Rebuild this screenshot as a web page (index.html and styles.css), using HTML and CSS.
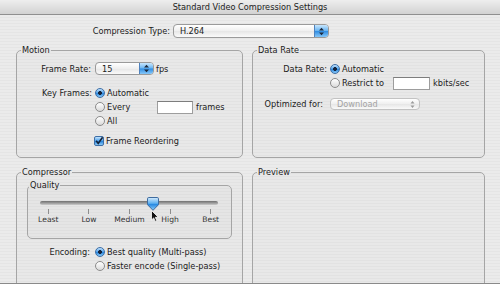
FILE: index.html
```html
<!DOCTYPE html>
<html lang="en">
<head>
    <meta charset="UTF-8">
    <title>Standard Video Compression Settings</title>
    <link rel="stylesheet" href="styles.css">
</head>
<body>
    <div class="window">
        <div class="titlebar">Standard Video Compression Settings</div>

        <div class="type-row">
            <span class="type-label">Compression Type:</span>
            <div class="popup type-popup">
                <span class="value">H.264</span>
                <span class="stepper">
                    <svg width="7" height="9" viewBox="0 0 7 9"><path d="M1 3.5h5L3.5 0.8z M1 5.5h5L3.5 8.2z" fill="#1d2a3d"/></svg>
                </span>
            </div>
        </div>

        <div class="groups">
            <fieldset class="group motion">
                <legend>Motion</legend>
                <div class="row rate-row">
                    <span class="lbl">Frame Rate:</span>
                    <div class="popup rate-popup">
                        <span class="value">15</span>
                        <span class="stepper">
                            <svg width="7" height="9" viewBox="0 0 7 9"><path d="M1 3.5h5L3.5 0.8z M1 5.5h5L3.5 8.2z" fill="#1d2a3d"/></svg>
                        </span>
                    </div>
                    <span class="unit">fps</span>
                </div>
                <div class="row keys-row">
                    <span class="lbl">Key Frames:</span>
                    <div class="options">
                        <div class="opt"><span class="radio on"></span>Automatic</div>
                        <div class="opt">
                            <span class="opt-every"><span class="radio"></span>Every</span>
                            <span class="field keys-field"></span>
                            <span class="unit">frames</span>
                        </div>
                        <div class="opt"><span class="radio"></span>All</div>
                    </div>
                </div>
                <div class="opt reorder">
                    <span class="check">
                        <svg width="10" height="10" viewBox="0 0 10 10"><path d="M2.2 4.8l2 2.6L8.6 1.2" fill="none" stroke="#14233a" stroke-width="1.6"/></svg>
                    </span>Frame Reordering
                </div>
            </fieldset>

            <fieldset class="group data-rate">
                <legend>Data Rate</legend>
                <div class="row datarate-row">
                    <span class="lbl">Data Rate:</span>
                    <div class="options">
                        <div class="opt"><span class="radio on"></span>Automatic</div>
                        <div class="opt">
                            <span class="opt-restrict"><span class="radio"></span>Restrict to</span>
                            <span class="field rate-field"></span>
                            <span class="unit">kbits/sec</span>
                        </div>
                    </div>
                </div>
                <div class="row optimized-row">
                    <span class="lbl">Optimized for:</span>
                    <div class="popup disabled download-popup">
                        <span class="value">Download</span>
                        <span class="stepper">
                            <svg width="7" height="9" viewBox="0 0 7 9"><path d="M1.5 3.5h4L3.5 1z M1.5 5.5h4L3.5 8z" fill="#9a9a9a"/></svg>
                        </span>
                    </div>
                </div>
            </fieldset>

            <fieldset class="group compressor">
                <legend>Compressor</legend>
                <fieldset class="group quality">
                    <legend>Quality</legend>
                    <div class="slider">
                        <div class="track"></div>
                        <svg class="thumb" style="left: 63.5%;" width="12" height="14" viewBox="0 0 12 14">
                            <defs>
                                <linearGradient id="thumbFill" x1="0" y1="0" x2="0" y2="1">
                                    <stop offset="0" stop-color="#d7ecfd"/>
                                    <stop offset="0.45" stop-color="#5eb0f0"/>
                                    <stop offset="0.55" stop-color="#2a8ae2"/>
                                    <stop offset="1" stop-color="#8fd0fb"/>
                                </linearGradient>
                            </defs>
                            <path d="M1.8 0.5h8.4a1.3 1.3 0 0 1 1.3 1.3v5.9L6 13.3 0.5 7.7V1.8a1.3 1.3 0 0 1 1.3-1.3z" fill="url(#thumbFill)" stroke="#3f6c9f"/>
                        </svg>
                        <svg class="cursor" width="8" height="12" viewBox="0 0 8 12">
                            <path d="M0.5 0.5v9.5l2.2-2.1 1.5 3.5 1.6-0.7-1.5-3.4h3z" fill="#111" stroke="#fff" stroke-width="0.8"/>
                        </svg>
                    </div>
                    <div class="stops">
                        <div class="stop"><span class="tick"></span>Least</div>
                        <div class="stop"><span class="tick"></span>Low</div>
                        <div class="stop"><span class="tick"></span>Medium</div>
                        <div class="stop"><span class="tick"></span>High</div>
                        <div class="stop"><span class="tick"></span>Best</div>
                    </div>
                </fieldset>
                <div class="row encoding-row">
                    <span class="lbl">Encoding:</span>
                    <div class="options">
                        <div class="opt"><span class="radio on"></span>Best quality (Multi-pass)</div>
                        <div class="opt"><span class="radio"></span>Faster encode (Single-pass)</div>
                    </div>
                </div>
            </fieldset>

            <fieldset class="group preview">
                <legend>Preview</legend>
            </fieldset>
        </div>
    </div>
</body>
</html>
```

FILE: styles.css
```css
body {
    margin: 0;
    font-family: "DejaVu Sans", sans-serif;
    font-size: 8.2px;
    color: #1b1b1b;
    background-color: #e9e9e9;
}
.window {
    width: 500px;
    height: 284px;
    box-sizing: border-box;
    overflow: hidden;
    border-bottom: 1px solid #8a8a8a;
    background: repeating-linear-gradient(to bottom, #ebebeb 0 2px, #e5e5e5 2px 3px);
}
.titlebar {
    height: 14px;
    line-height: 14px;
    text-align: center;
    color: #222;
    border-bottom: 1px solid #8f8f8f;
    background: linear-gradient(#eeeeee, #d2d2d2);
}
.type-row {
    display: flex;
    align-items: center;
    margin-top: 9px;
    height: 14px;
}
.type-label {
    width: 173px;
    padding-right: 3px;
    box-sizing: border-box;
    text-align: right;
}

/* popup buttons */
.popup {
    display: flex;
    align-items: stretch;
    box-sizing: border-box;
    border: 1px solid #9a9a9a;
    border-radius: 4px;
    background: linear-gradient(#ffffff, #efefef 50%, #e6e6e6 51%, #fafafa);
    overflow: hidden;
}
.popup .value {
    flex: 1;
    display: flex;
    align-items: center;
    padding-left: 6px;
}
.stepper {
    width: 13px;
    display: flex;
    align-items: center;
    justify-content: center;
    border-left: 1px solid #4f82bd;
    background: linear-gradient(#c8e6fd, #6ab5f2 48%, #2f8ce2 52%, #86c8f9);
}
.type-popup {
    width: 156px;
    height: 14px;
}
.rate-popup {
    width: 59px;
    height: 13px;
}
.download-popup {
    width: 90px;
    height: 12px;
    color: #a4a4a4;
    border-color: #c2c2c2;
}
.download-popup .stepper {
    border-left: none;
    background: none;
}

/* group boxes */
.groups {
    display: grid;
    grid-template-columns: 227px 233px;
    grid-template-rows: 114px 140px;
    column-gap: 9px;
    row-gap: 8px;
    padding: 6px 0 0 16px;
}
.group {
    margin: 0;
    padding: 0;
    min-width: 0;
    border: 1px solid #a5a5a5;
    border-radius: 5px;
    background-color: rgba(0, 0, 0, 0.012);
}
.group legend {
    margin-left: 4px;
    padding: 0 1px;
    line-height: 12px;
}
.row {
    display: flex;
    align-items: center;
}
.lbl {
    width: 78px;
    padding-right: 4px;
    box-sizing: border-box;
    text-align: right;
    flex-shrink: 0;
}
.options {
    display: flex;
    flex-direction: column;
}
.opt {
    display: flex;
    align-items: center;
    height: 14px;
}
.unit {
    margin-left: 3px;
}

/* radios and checkbox */
.radio {
    width: 10px;
    height: 10px;
    margin-right: 2px;
    box-sizing: border-box;
    border-radius: 50%;
    border: 1px solid #8b8b8b;
    background: linear-gradient(#ffffff, #dadada);
    flex-shrink: 0;
}
.radio.on {
    border-color: #3d6ea6;
    background: radial-gradient(circle, #15223a 0 1.6px, transparent 2.2px),
                linear-gradient(#c3e2fc, #4ba0ec 50%, #2a86dd 55%, #8bcbf9);
}
.check {
    display: flex;
    width: 10px;
    height: 10px;
    margin-right: 2px;
    box-sizing: border-box;
    border-radius: 2px;
    border: 1px solid #3d6ea6;
    background: linear-gradient(#c3e2fc, #4ba0ec 50%, #2a86dd 55%, #8bcbf9);
}
.check svg {
    margin: -1px;
}
.field {
    height: 13px;
    box-sizing: border-box;
    border: 1px solid #9d9d9d;
    border-top-color: #7d7d7d;
    background-color: #fff;
}

/* motion */
.rate-row {
    margin-top: 6px;
    height: 13px;
}
.rate-row .unit {
    margin-left: 2px;
}
.keys-row {
    margin-top: 11px;
    align-items: flex-start;
}
.keys-row .lbl {
    line-height: 14px;
    padding-right: 3px;
}
.opt-every {
    display: flex;
    align-items: center;
    width: 62px;
}
.keys-field {
    width: 36px;
}
.reorder {
    margin-top: 6px;
    padding-left: 77px;
}

/* data rate */
.data-rate .lbl {
    width: 77px;
    padding-right: 3px;
}
.datarate-row {
    margin-top: 6px;
    align-items: flex-start;
}
.datarate-row .lbl {
    line-height: 14px;
}
.opt-restrict {
    display: flex;
    align-items: center;
    width: 63px;
}
.rate-field {
    width: 37px;
}
.optimized-row {
    margin-top: 8px;
}
.data-rate .optimized-row .lbl {
    padding-right: 7px;
}

/* compressor */
.quality {
    margin: 1px 10px 0 10px;
    padding: 0 0 13px 0;
}
.quality legend {
    margin-left: 1px;
}
.slider {
    position: relative;
    height: 4px;
    margin: 10px 13px 0 12px;
}
.track {
    height: 4px;
    border-radius: 2px;
    background: linear-gradient(#6f6f6f, #a2a2a2 60%, #cdcdcd);
}
.thumb {
    position: absolute;
    top: -4px;
    transform: translateX(-50%);
}
.cursor {
    position: absolute;
    left: 111px;
    top: 9px;
}
.stops {
    display: grid;
    grid-template-columns: repeat(5, 1fr);
    margin-top: 4px;
    font-size: 7.6px;
    color: #333;
}
.stop {
    display: flex;
    flex-direction: column;
    align-items: center;
    line-height: 11px;
}
.tick {
    width: 1px;
    height: 5px;
    background-color: #8d8d8d;
}
.encoding-row {
    margin-top: 6px;
    align-items: flex-start;
}
.encoding-row .lbl {
    line-height: 14px;
    padding-right: 5px;
}
```
